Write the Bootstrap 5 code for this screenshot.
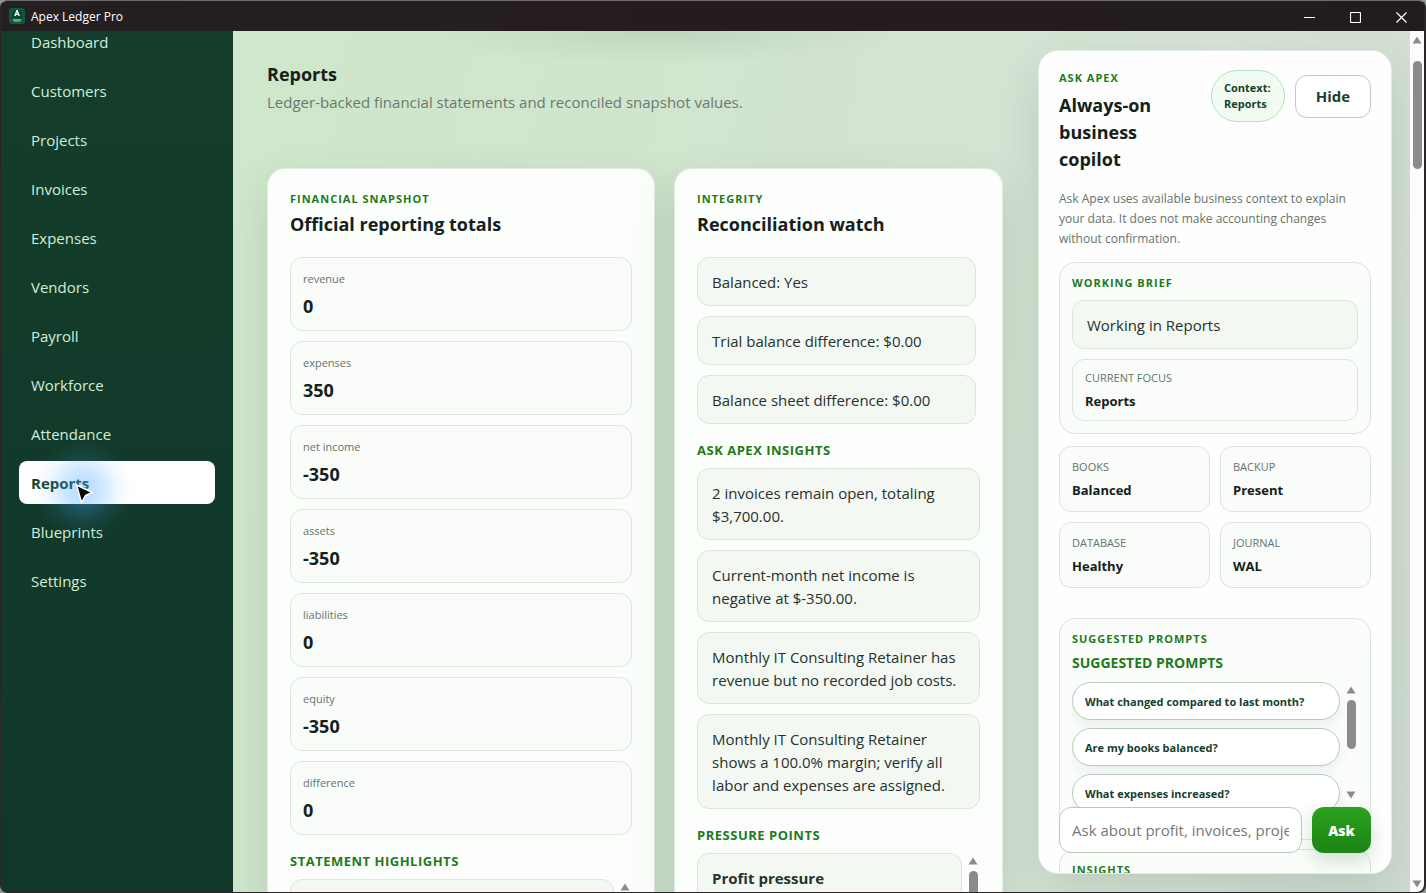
<!DOCTYPE html>
<html lang="en">
<head>
<meta charset="utf-8">
<meta name="viewport" content="width=device-width, initial-scale=1">
<title>Apex Ledger Pro</title>
<link rel="stylesheet" href="https://cdn.jsdelivr.net/npm/bootstrap@5.3.0/dist/css/bootstrap.min.css">
<style>
  :root { --ink: #14211b; --muted-ink: #66736c; --leaf: #1f7a1c; --line: #dbe5dc; }
  body { font-family: "Open Sans", "Noto Sans", sans-serif; font-size: 15px; line-height: 23px; color: var(--ink); background: #8f9391; }
  .app-window { background: #241c1f; border: 1px solid #2a2627; border-right-width: 2px; border-top-color: #6d6a6b; border-radius: 8px; }
  .title-bar { height: 30px; font-size: 12px; background: linear-gradient(90deg, #241f20, #251c22 50%, #231c1c); color: #fff; }
  .brand-name { margin-left: 6px; }
  .caption-btn { width: 46px; height: 30px; border: 0; background: none; color: #fff; }
  .side-nav { width: 232px; background: linear-gradient(#143d2b, #10372a); }
  .side-list { margin-top: -11px; gap: 6px; padding: 0 18px; }
  .side-link { height: 43px; padding: 1px 12px 0; display: flex; align-items: center; border-radius: 8px; color: #d2eed6; text-decoration: none; }
  .side-link.active { background: #fff; color: #173f2d; font-weight: 700; }
  .pointer-glow { position: absolute; left: 14px; top: -22px; width: 100px; height: 100px; border-radius: 50%; background: radial-gradient(circle, rgba(70,165,255,.42), rgba(70,165,255,.28) 25%, rgba(70,165,255,.08) 50%, rgba(70,165,255,0) 70%); pointer-events: none; }
  .pointer-icon { position: absolute; left: 56px; top: 22px; pointer-events: none; }
  .workspace { background: radial-gradient(ellipse 240px 34px at 36% 0, rgba(70,110,80,.13), transparent), linear-gradient(100deg, #cfe7ca, #d2e4d0 45%, #d7e3d6 75%, #d1dcd3); padding: 19px 18px 0 34px; gap: 35px; }
  .page-head { height: 118px; padding-top: 11px; }
  .heading { font-size: 18px; line-height: 26px; font-weight: 700; margin: 0; }
  .page-note { margin: 0; padding-top: 4px; color: #687a6e; }
  .report-grid { display: grid; grid-template-columns: minmax(0, 118fr) minmax(0, 100fr); gap: 19px; }
  .sheet { background: #fcfefb; border: 1px solid #e3ebe3; border-radius: 18px; box-shadow: 0 18px 44px rgba(28,72,42,.14); }
  .report-sheet { padding: 22px 22px; border-bottom: 0; border-radius: 18px 18px 0 0; }
  .eyebrow { font-size: 11px; line-height: 16px; font-weight: 700; letter-spacing: 1px; color: var(--leaf); text-transform: uppercase; margin: 0; }
  .subhead { font-size: 13px; line-height: 20px; font-weight: 700; color: var(--leaf); text-transform: uppercase; margin: 16px 0 8px; letter-spacing: 0.5px; }
  .stack { display: flex; flex-direction: column; gap: 10px; }
  .metric { border: 1px solid var(--line); border-radius: 12px; background: #f9fcf9; padding: 12px; }
  .metric-label { font-size: 11px; line-height: 16px; color: var(--muted-ink); padding-top: 1px; }
  .metric-value { font-size: 18px; line-height: 24px; font-weight: 700; margin-top: 7px; }
  .note { border: 1px solid var(--line); border-radius: 12px; background: #f3f8f3; padding: 13px 14px 11px; color: #26322b; }
  .fact-label { font-size: 11px; line-height: 16px; color: var(--muted-ink); text-transform: uppercase; }
  .fact-value { font-size: 13px; line-height: 18px; font-weight: 700; margin-top: 6px; }
  .focus-box { padding-top: 10px; padding-bottom: 10px; }
  .soft-box { border: 1px solid var(--line); border-radius: 16px; background: #fbfdfb; padding: 12px; }
  .brief-label { margin-bottom: 9px; }
  .scroll-rail { width: 14px; display: flex; flex-direction: column; align-items: center; gap: 6px; flex: none; }
  .scroll-rail svg { flex: none; }
  .rail-thumb { width: 9px; border-radius: 5px; background: #8b8b8b; }
  .page-rail { background: #fcfdfc; padding: 5px 0 4px; border-bottom-right-radius: 7px; }
  .page-rail .rail-thumb { height: 108px; margin-top: 11px; }
  .ask-panel { width: 354px; flex: none; margin-bottom: 18px; padding: 19px 20px 0; border-radius: 20px; background: #fdfefd; }
  .ask-title { font-size: 18px; line-height: 27px; font-weight: 700; margin: 6px 0 0; max-width: 120px; }
  .ask-actions { gap: 10px; }
  .context-pill { width: 74px; height: 52px; padding: 0 12px; border: 1px solid #bcdcbe; border-radius: 26px; background: #f2fbf2; color: #173f2d; font-size: 11px; line-height: 16px; font-weight: 700; }
  .hide-btn { width: 76px; height: 43px; border: 1px solid #bcccbf; border-radius: 12px; background: #fff; color: #173f2d; font-weight: 700; }
  .ask-text { font-size: 12px; line-height: 20px; color: var(--muted-ink); margin: 16px 0 13px; }
  .fact-grid { display: grid; grid-template-columns: 1fr 1fr; gap: 10px; margin: 12px 0 30px; }
  .prompt-title { font-size: 14px; line-height: 22px; font-weight: 700; color: var(--leaf); margin: 5px 0 8px; }
  .prompt-box { height: 222px; margin-bottom: 9px; }
  .prompt-list { height: 125px; overflow: hidden; }
  .prompt-btn { height: 38px; flex: none; border: 1px solid #b5cdb8; border-radius: 19px; background: #fff; color: #173f2d; font-size: 11px; font-weight: 700; text-align: left; padding: 0 12px; box-shadow: 0 6px 12px rgba(28,72,42,.07); }
  .prompt-thumb { height: 49px; }
  .ask-form { position: absolute; left: 20px; right: 20px; bottom: 20px; gap: 10px; }
  .ask-input { height: 46px; min-width: 0; flex: 1; border: 1px solid #b8c8bb; border-radius: 12px; background: #fff; padding: 0 12px; color: var(--ink); }
  .ask-input::placeholder { color: #777; opacity: 1; }
  .ask-btn { width: 59px; height: 46px; border: 0; border-radius: 12px; background: linear-gradient(#2ba11e, #1d8415); color: #fff; font-weight: 800; font-size: 14px; box-shadow: 0 8px 18px rgba(28,110,32,.2); }
</style>
</head>
<body>
<div class="app-window vh-100 d-flex flex-column overflow-hidden">
  <header class="title-bar d-flex align-items-center flex-shrink-0 ps-2">
    <svg width="16" height="16" viewBox="0 0 16 16" aria-hidden="true"><rect width="16" height="16" rx="3" fill="#10593a"/><path d="M4 2h8l2 9H2z" fill="#0c4630"/><path d="M5.2 8L7.4 2h1.3l2.2 6H9.4L9 6.9H7L6.6 8zM7.4 5.7h1.2L8 3.9z" fill="#fff"/><path d="M3.5 11h9q0 3-4.500 3t-4.500-3z" fill="#5fa97b"/></svg>
    <span class="brand-name me-auto">Apex Ledger Pro</span>
    <button class="caption-btn" aria-label="Minimize"><svg width="11" height="11"><path d="M0 5.500h11" stroke="currentColor"/></svg></button>
    <button class="caption-btn" aria-label="Maximize"><svg width="11" height="11"><rect x=".5" y=".5" width="10" height="10" rx="1" fill="none" stroke="currentColor" stroke-width="1.200"/></svg></button>
    <button class="caption-btn" aria-label="Close"><svg width="11" height="11"><path d="M.5.5l10 10M10.500.5l-10 10" stroke="currentColor" stroke-width="1.200"/></svg></button>
  </header>

  <div class="d-flex flex-grow-1 overflow-hidden">
    <nav class="side-nav flex-shrink-0 overflow-hidden" aria-label="Main">
      <div class="side-list d-flex flex-column">
        <a class="side-link" href="#">Dashboard</a>
        <a class="side-link" href="#">Customers</a>
        <a class="side-link" href="#">Projects</a>
        <a class="side-link" href="#">Invoices</a>
        <a class="side-link" href="#">Expenses</a>
        <a class="side-link" href="#">Vendors</a>
        <a class="side-link" href="#">Payroll</a>
        <a class="side-link" href="#">Workforce</a>
        <a class="side-link" href="#">Attendance</a>
        <div class="position-relative z-1">
          <a class="side-link active" href="#" aria-current="page">Reports</a>
          <span class="pointer-glow"></span>
          <svg class="pointer-icon" width="20" height="22" viewBox="0 0 20 22" aria-hidden="true"><path d="M1.500 2l16 7.500-7 3-4 7z" fill="#050505" stroke="#fff" stroke-width="1.500" stroke-linejoin="round"/></svg>
        </div>
        <a class="side-link" href="#">Blueprints</a>
        <a class="side-link" href="#">Settings</a>
      </div>
    </nav>

    <main class="workspace d-flex flex-grow-1 overflow-hidden">
      <section class="flex-grow-1">
        <div class="page-head">
          <h1 class="heading">Reports</h1>
          <p class="page-note">Ledger-backed financial statements and reconciled snapshot values.</p>
        </div>
        <div class="report-grid">
          <article class="sheet report-sheet">
            <p class="eyebrow">Financial snapshot</p>
            <h2 class="heading mt-1">Official reporting totals</h2>
            <div class="stack pt-1 mt-3">
              <div class="metric"><div class="metric-label">revenue</div><div class="metric-value">0</div></div>
              <div class="metric"><div class="metric-label">expenses</div><div class="metric-value">350</div></div>
              <div class="metric"><div class="metric-label">net income</div><div class="metric-value">-350</div></div>
              <div class="metric"><div class="metric-label">assets</div><div class="metric-value">-350</div></div>
              <div class="metric"><div class="metric-label">liabilities</div><div class="metric-value">0</div></div>
              <div class="metric"><div class="metric-label">equity</div><div class="metric-value">-350</div></div>
              <div class="metric"><div class="metric-label">difference</div><div class="metric-value">0</div></div>
            </div>
            <h3 class="subhead">Statement highlights</h3>
            <div class="d-flex gap-1">
              <div class="note flex-grow-1">&nbsp;</div>
              <div class="scroll-rail pt-1"><svg width="10" height="8"><path d="M5 .5L9.500 7.500h-9z" fill="#8b8b8b"/></svg><div class="rail-thumb flex-grow-1"></div></div>
            </div>
          </article>

          <article class="sheet report-sheet">
            <p class="eyebrow">Integrity</p>
            <h2 class="heading mt-1">Reconciliation watch</h2>
            <div class="stack pt-1 mt-3 pe-1">
              <div class="note">Balanced: Yes</div>
              <div class="note">Trial balance difference: $0.00</div>
              <div class="note">Balance sheet difference: $0.00</div>
            </div>
            <h3 class="subhead">Ask Apex insights</h3>
            <div class="stack">
              <div class="note">2 invoices remain open, totaling $3,700.00.</div>
              <div class="note">Current-month net income is negative at $-350.00.</div>
              <div class="note">Monthly IT Consulting Retainer has revenue but no recorded job costs.</div>
              <div class="note">Monthly IT Consulting Retainer shows a 100.0% margin; verify all labor and expenses are assigned.</div>
            </div>
            <h3 class="subhead">Pressure points</h3>
            <div class="d-flex gap-1">
              <div class="note flex-grow-1 fw-bold">Profit pressure</div>
              <div class="scroll-rail pt-1"><svg width="10" height="8"><path d="M5 .5L9.500 7.500h-9z" fill="#8b8b8b"/></svg><div class="rail-thumb flex-grow-1"></div></div>
            </div>
          </article>
        </div>
      </section>

      <aside class="ask-panel sheet position-relative overflow-hidden">
        <div class="d-flex">
          <div class="flex-grow-1">
            <p class="eyebrow">Ask Apex</p>
            <h2 class="ask-title">Always-on business copilot</h2>
          </div>
          <div class="ask-actions d-flex align-items-center align-self-start flex-shrink-0">
            <div class="context-pill d-flex align-items-center">Context: Reports</div>
            <button class="hide-btn" type="button">Hide</button>
          </div>
        </div>
        <p class="ask-text">Ask Apex uses available business context to explain your data. It does not make accounting changes without confirmation.</p>
        <div class="soft-box">
          <p class="eyebrow brief-label">Working brief</p>
          <div class="stack">
            <div class="note">Working in Reports</div>
            <div class="metric focus-box"><div class="fact-label">Current focus</div><div class="fact-value">Reports</div></div>
          </div>
        </div>
        <div class="fact-grid">
          <div class="metric"><div class="fact-label">Books</div><div class="fact-value">Balanced</div></div>
          <div class="metric"><div class="fact-label">Backup</div><div class="fact-value">Present</div></div>
          <div class="metric"><div class="fact-label">Database</div><div class="fact-value">Healthy</div></div>
          <div class="metric"><div class="fact-label">Journal</div><div class="fact-value">WAL</div></div>
        </div>
        <div class="soft-box prompt-box">
          <p class="eyebrow">Suggested prompts</p>
          <h3 class="prompt-title">SUGGESTED PROMPTS</h3>
          <div class="d-flex prompt-list">
            <div class="d-flex flex-column gap-2 flex-grow-1">
              <button class="prompt-btn" type="button">What changed compared to last month?</button>
              <button class="prompt-btn" type="button">Are my books balanced?</button>
              <button class="prompt-btn" type="button">What expenses increased?</button>
            </div>
            <div class="scroll-rail pt-1 pb-1 ms-1 mb-1"><svg width="10" height="8"><path d="M5 .5L9.500 7.500h-9z" fill="#8b8b8b"/></svg><div class="rail-thumb prompt-thumb mb-auto"></div><svg width="10" height="8"><path d="M5 7.500L.5.500h9z" fill="#8b8b8b"/></svg></div>
          </div>
        </div>
        <div class="soft-box"><p class="eyebrow">Insights</p></div>
        <form class="ask-form d-flex">
          <input class="ask-input" type="text" placeholder="Ask about profit, invoices, projects" aria-label="Ask Apex a question">
          <button class="ask-btn" type="button">Ask</button>
        </form>
      </aside>
    </main>
    <div class="scroll-rail page-rail">
      <svg width="10" height="8"><path d="M5 .5L9.500 7.500h-9z" fill="#8b8b8b"/></svg>
      <div class="rail-thumb mb-auto"></div>
      <svg width="10" height="8"><path d="M5 7.500L.5.500h9z" fill="#8b8b8b"/></svg>
    </div>
  </div>
</div>
<script src="https://cdn.jsdelivr.net/npm/bootstrap@5.3.0/dist/js/bootstrap.bundle.min.js"></script>
</body>
</html>
